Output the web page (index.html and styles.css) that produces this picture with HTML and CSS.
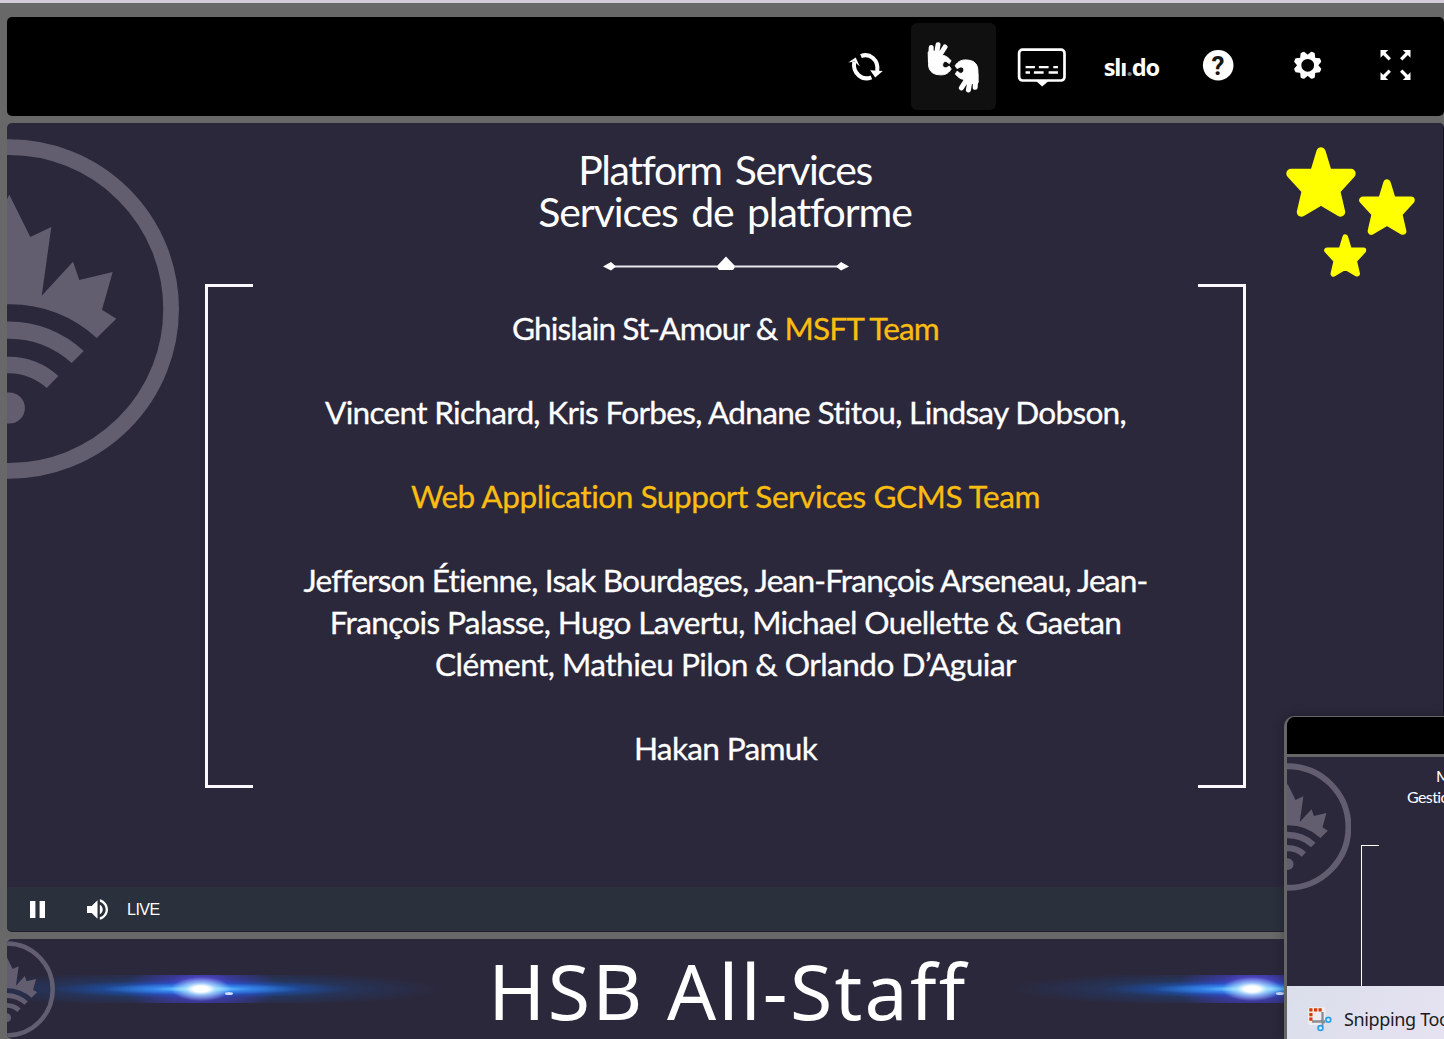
FILE: index.html
```html
<!DOCTYPE html>
<html lang="en">
<head>
<meta charset="utf-8">
<title>HSB All-Staff</title>
<link rel="stylesheet" href="styles.css">
</head>
<body>
<svg class="defs" width="0" height="0" aria-hidden="true">
  <symbol id="star" viewBox="0 0 70 70">
    <path d="M35 5L41.500 26.500H65L49.500 43.500L54.500 65L35 53.500L15.500 65L20.500 43.500L5 26.500H28.500Z" fill="#ff0" stroke="#ff0" stroke-width="9.400" stroke-linejoin="round"/>
  </symbol>
  <g id="leaf">
    <circle r="161.800" fill="none" stroke="#625e70" stroke-width="15.700"/>
    <path fill="#625e70" d="M0-114.300L21-72L42-82L32.400-13.300L63.700-47.300L70-29L103.400-37L92.700.7L107 9.700L87.400 29A127 127 0 0 0 0-4.700A127 127 0 0 0-87.400 29V-13L-32-13L-42-82L-21-72Z"/>
    <path fill="#625e70" d="M-74 42A108 108 0 0 1 74.400 42L62.400 54A92 92 0 0 0-62 54Z"/>
    <path fill="#625e70" d="M-49 67A72 72 0 0 1 49 67L37.400 79A55 55 0 0 0-37.400 79Z"/>
    <circle cy="99" r="15.600" fill="#625e70"/>
  </g>
</svg>

<header class="toolbar">
  <button class="tool" aria-label="Refresh">
    <svg viewBox="822.6 23 85 87"><g fill="none" stroke="#fff" stroke-width="4"><path d="M860.600 56.200C869 52.500 878.500 60 876.800 71"/><path d="M871 77.300C862 81 852 73.500 853.800 62"/></g><path fill="#fff" d="M869.800 70.300L882.400 71L874.800 77.500ZM847.900 62.600L855.300 57.500L859.400 66.500L854 61.500Z"/></svg>
  </button>
  <button class="tool active" aria-label="Sign language">
    <svg viewBox="911 23 85 87">
      <g id="hand" fill="#fff" stroke="#fff" stroke-linecap="round" stroke-linejoin="round">
        <path stroke-width="5" d="M931.200 47.500L930.600 60M938 44.800L935.500 60M945 47L938 58"/>
        <path stroke-width="1" d="M928.500 52L932 50L941 55.300C945 55 948.500 57.500 951 60.800L949.300 63.600L946.800 61.800C942.200 59.800 940.500 68.500 946.300 67.800L949.300 66.200L951.200 69C948 74.500 943 75.300 938.500 74.700C931.500 74 928.500 70 928.500 64Z"/>
      </g>
      <use href="#hand" transform="rotate(180 953.2 67.4)"/>
    </svg>
  </button>
  <button class="tool" aria-label="Captions">
    <svg viewBox="999.4 23 85 87"><rect x="1019.500" y="49.700" width="45.400" height="30.800" rx="3.500" fill="none" stroke="#fff" stroke-width="2.700"/><path fill="#fff" d="M1036.500 81H1049L1042.600 86.500Z"/><path stroke="#fff" stroke-width="2.300" d="M1026 67.200h9.300M1039.300 67.200h9.700M1053.700 67.200h4.600M1026 72.500h4.400M1034.300 72.500h9.700M1049 72.500h9.300"/></svg>
  </button>
  <button class="tool slido" aria-label="Slido">slı<span class="slido-dot">.</span>do</button>
  <button class="tool" aria-label="Help">
    <svg viewBox="1176.2 23 85 87"><circle cx="1218.400" cy="65.300" r="15.300" fill="#fff"/><text class="help-mark" x="1218.200" y="74.600" text-anchor="middle">?</text></svg>
  </button>
  <button class="tool" aria-label="Settings">
    <svg viewBox="-42.700 -42.300 85 87"><circle r="8.400" fill="none" stroke="#fff" stroke-width="4"/>
      <g fill="#fff"><g id="tooth2"><path id="tooth" d="M-4.500-9L-1.900-13.900Q0-14.300 1.900-13.900L4.500-9Z" transform="rotate(22.500)"/><use href="#tooth" transform="rotate(45)"/></g><use href="#tooth2" transform="rotate(90)"/><use href="#tooth2" transform="rotate(180)"/><use href="#tooth2" transform="rotate(270)"/></g></svg>
  </button>
  <button class="tool" aria-label="Full screen">
    <svg viewBox="-42.500 -42 85 87"><g id="arrow"><path fill="#fff" d="M-15-15H-7.300L-15-7.300Z"/><path d="M-12.500-12.500L-5.700-5.700" stroke="#fff" stroke-width="3.300"/></g><use href="#arrow" transform="scale(-1 1)"/><use href="#arrow" transform="scale(1 -1)"/><use href="#arrow" transform="scale(-1 -1)"/></svg>
  </button>
</header>

<main class="player">
  <section class="slide">
    <svg class="emblem" viewBox="-2.300 -170 172 340"><use href="#leaf"/></svg>
    <div class="stars"><svg class="star star-lg"><use href="#star"/></svg><svg class="star star-md"><use href="#star"/></svg><svg class="star star-sm"><use href="#star"/></svg></div>
    <div class="slide-title"><div class="t1">Platform Services</div><div class="t2">Services de platforme</div></div>
    <svg class="divider" viewBox="0 0 246 16"><path d="M6 10.500H240" stroke="#e8e6ee" stroke-width="2.200"/><path fill="#fff" d="M0 10.500L8 6L13 10.500L8 14.500ZM246 10.500L238 6L233 10.500L238 14.500ZM123 .5L131.500 9.500V12L130 14H116L114.500 12V9.500Z"/></svg>
    <div class="credits">
      <div class="bracket bracket-left"></div>
      <div class="names">
        <p class="n1">Ghislain St-Amour &amp; <em>MSFT Team</em></p>
        <p class="n2">Vincent Richard, Kris Forbes, Adnane Stitou, Lindsay Dobson,</p>
        <p class="n3"><em>Web Application Support Services GCMS Team</em></p>
        <p><span class="n4">Jefferson Étienne, Isak Bourdages, Jean-François Arseneau, Jean-</span><br><span class="n5">François Palasse, Hugo Lavertu, Michael Ouellette &amp; Gaetan</span><br><span class="n6">Clément, Mathieu Pilon &amp; Orlando D’Aguiar</span></p>
        <p class="n7">Hakan Pamuk</p>
      </div>
      <div class="bracket bracket-right"></div>
    </div>
  </section>
  <div class="controls">
    <svg class="pause" width="15" height="17"><path fill="#fff" d="M0 0h5.400v17H0zM9.600 0H15v17H9.600z"/></svg>
    <svg class="volume" viewBox="3 3 18 18"><path fill="#fff" d="M3 9v6h4l5 5V4L7 9H3zm13.500 3c0-1.770-1.020-3.290-2.500-4.030v8.050c1.480-.73 2.500-2.250 2.500-4.020zM14 3.230v2.060c2.890.86 5 3.540 5 6.710s-2.110 5.850-5 6.710v2.060c4.010-.91 7-4.490 7-8.770s-2.990-7.860-7-8.770z"/></svg>
    <span class="live">LIVE</span>
  </div>
</main>

<footer class="banner">
  <div class="flare"><i class="glint"></i></div>
  <div class="banner-title">HSB All-Staff</div>
  <div class="flare"><i class="glint"></i></div>
  <svg class="banner-emblem" viewBox="1 -170 169 340"><use href="#leaf"/></svg>
</footer>

<aside class="preview">
  <div class="preview-window">
    <div class="preview-bar"></div>
    <div class="preview-slide">
      <svg class="preview-emblem" viewBox="-1.600 -170 170.300 340"><use href="#leaf"/></svg>
      <div class="preview-side">
        <p class="preview-text"><span class="preview-m">M</span><br>Gestion</p>
        <div class="preview-bracket"></div>
      </div>
    </div>
  </div>
  <div class="taskbar">
    <svg class="snip" viewBox="0 0 24 25"><rect width="17.500" height="18" rx="2" fill="#eeecee"/><path fill="none" stroke="#888d94" stroke-width="2.300" d="M14.500 5v9.500M4 14.500h13"/><path stroke="#888d94" stroke-width="2" d="M13 13l4 3M14.500 14v5"/><path fill="#d83b01" d="M1.300 1.300h3.200v3.200H1.300zM6 1.300h3.200v3.200H6zM10.500 1.300h3.200v3.200h-3.200zM1.300 6h3.200v3.200H1.300zM1.300 10.500h3.200v3.200H1.300z"/><g fill="#dbeefa" stroke="#2aa0ea" stroke-width="1.800"><circle cx="20.300" cy="12.700" r="2.400"/><circle cx="12.500" cy="21" r="2.400"/></g></svg>
    <span class="snip-label">Snipping Tool</span>
  </div>
</aside>
</body>
</html>
```
FILE: styles.css
```css
* { box-sizing: border-box; }

body {
  margin: 0;
  height: 1039px;
  overflow: hidden;
  display: flex;
  flex-direction: column;
  gap: 7px;
  padding: 14px 0 0 7px;
  border-top: 3px solid #d3cada;
  background: #686868;
  position: relative;
  font-family: Lato, "Open Sans", sans-serif;
}

.defs { position: absolute; }

.toolbar {
  flex: none;
  height: 99px;
  display: flex;
  justify-content: flex-end;
  gap: 3.4px;
  padding: 6px 6px 6px 0;
  background: #000;
  border-radius: 5px;
}
.tool {
  width: 85px;
  height: 87px;
  padding: 0;
  border: 0;
  border-radius: 6px;
  background: none;
}
.tool.active { background: #101010; }
.tool svg { display: block; width: 85px; height: 87px; }
.slido {
  padding-left: 2px;
  color: #fff;
  font: 700 23.5px/88px "Noto Sans", sans-serif;
  letter-spacing: -1.1px;
}
.slido-dot { color: #777; }
.help-mark { font: 700 26px Roboto, sans-serif; fill: #161616; }

.player {
  flex: none;
  height: 809px;
  display: flex;
  flex-direction: column;
  border-radius: 5px;
  border-right: 1px solid #15141d;
  border-bottom: 1px solid #20202e;
  background: #2c283c;
  overflow: hidden;
}
.slide {
  position: relative;
  height: 764px;
  display: flex;
  flex-direction: column;
  align-items: center;
  color: #fff;
}
.emblem { position: absolute; left: 0; top: 16px; width: 172px; height: 340px; }
.stars { position: absolute; left: 1278.500px; top: 24px; width: 130px; height: 130px; }
.star { position: absolute; }
.star-lg { left: 0; top: 0; width: 70px; height: 70px; }
.star-md { left: 73.500px; top: 31.500px; width: 56px; height: 56px; }
.star-sm { left: 38.500px; top: 87px; width: 42.500px; height: 43px; }

.slide-title {
  margin-top: 26px;
  font-size: 41px;
  line-height: 42px;
  text-align: center;
}
.t1 { letter-spacing: -1.400px; word-spacing: 4px; }
.t2 { letter-spacing: -1.100px; word-spacing: 4px; }
.divider { width: 246px; height: 16px; margin: 23px 0 0 1px; }
.credits {
  display: flex;
  justify-content: space-between;
  width: 1041px;
  height: 504px;
  margin: 12px 0 0 1px;
}
.bracket { width: 48px; border: 3px solid #fbf9ff; }
.bracket-left { border-right: 0; }
.bracket-right { border-left: 0; }
.names {
  padding-top: 23px;
  text-align: center;
  white-space: nowrap;
  -webkit-text-stroke: .3px currentColor;
}
.names p { margin: 0 0 42px; font-size: 31.600px; line-height: 42px; }
.names em { font-style: normal; color: #f9bd12; }
.n1 { letter-spacing: -.880px; }
.n2 { letter-spacing: -.710px; }
.n3 { letter-spacing: -.480px; }
.n4 { letter-spacing: -.810px; }
.n5 { letter-spacing: -.650px; }
.n6 { letter-spacing: -.540px; }
.n7 { letter-spacing: -.680px; }

.controls {
  height: 44px;
  display: flex;
  align-items: center;
  padding-left: 23px;
  background: #2b303d;
}
.volume { width: 21px; height: 21px; margin-left: 42px; }
.live {
  margin-left: 19px;
  padding-top: 2px;
  color: #fff;
  font: 16px "Liberation Sans", sans-serif;
  letter-spacing: -.5px;
}

.banner {
  position: relative;
  flex: none;
  height: 100px;
  display: flex;
  align-items: center;
  background: #2b283c;
  border-radius: 5px;
  overflow: hidden;
}
.banner-emblem { position: absolute; left: 0; top: 2px; width: 48px; height: 97px; }
.banner-title {
  flex: 1;
  padding: 3px 0 0 3px;
  text-align: center;
  color: #fff;
  font: 400 77px/97px "Noto Sans", sans-serif;
  letter-spacing: 2.300px;
  white-space: nowrap;
}
.flare {
  position: relative;
  flex: none;
  width: 484px;
  height: 28px;
  margin-left: -48px;
  background:
    radial-gradient(ellipse 30px 12px at 50% 14px, #fff 25%, rgba(190, 235, 255, .7) 50%, transparent),
    radial-gradient(ellipse 100px 6px at 50% 14px, rgba(140, 240, 255, .95), rgba(70, 170, 255, .5) 50%, transparent),
    radial-gradient(ellipse 150px 9px at 50% 14px, rgba(30, 115, 255, .9), rgba(25, 100, 230, .5) 50%, transparent),
    radial-gradient(ellipse 75px 34px at 50% 12px, rgba(100, 85, 255, 1), rgba(80, 65, 230, .45) 45%, transparent),
    radial-gradient(ellipse 242px 18px at 50% 14px, rgba(25, 80, 160, .7), transparent);
}
.glint {
  position: absolute;
  left: 266px;
  top: 17px;
  width: 8px;
  height: 3px;
  border-radius: 50%;
  background: #cfdcff;
}
.banner-title + .flare { margin: 0 -50px 0 0; }

.preview {
  position: absolute;
  left: 1284px;
  top: 713px;
  width: 160px;
  height: 323px;
  overflow: hidden;
  border-radius: 10px 0 0 0;
  border-left: 3px solid #666;
  border-top: 1px solid #666;
  box-shadow: 0 0 12px rgba(0, 0, 0, .3);
}
.preview-bar { height: 37px; background: #000; }
.preview-slide {
  height: 232px;
  display: flex;
  border-top: 3px solid #666;
  background: #2c283c;
  color: #fff;
}
.preview-emblem { flex: none; width: 64px; height: 128px; margin-top: 6px; }
.preview-side { flex: none; display: flex; flex-direction: column; width: 93px; padding-left: 10px; }
.preview-text {
  margin: 8px 0 0;
  padding-left: 46px;
  font-size: 16px;
  line-height: 21px;
  letter-spacing: -.6px;
  white-space: nowrap;
}
.preview-m { margin-left: 29px; }
.preview-bracket { flex: 1; width: 18px; margin-top: 38px; border: solid #fff; border-width: 1px 0 0 1px; }
.taskbar {
  height: 53px;
  margin-left: -1px;
  display: flex;
  align-items: center;
  gap: 12px;
  padding: 13px 0 0 22px;
  background: linear-gradient(120deg, #dadeeb, #e6e2f1);
  white-space: nowrap;
  color: #1b1b1f;
  font: 18px "Noto Sans", sans-serif;
  letter-spacing: -.35px;
}
.snip { flex: none; width: 24px; height: 25px; }
```
